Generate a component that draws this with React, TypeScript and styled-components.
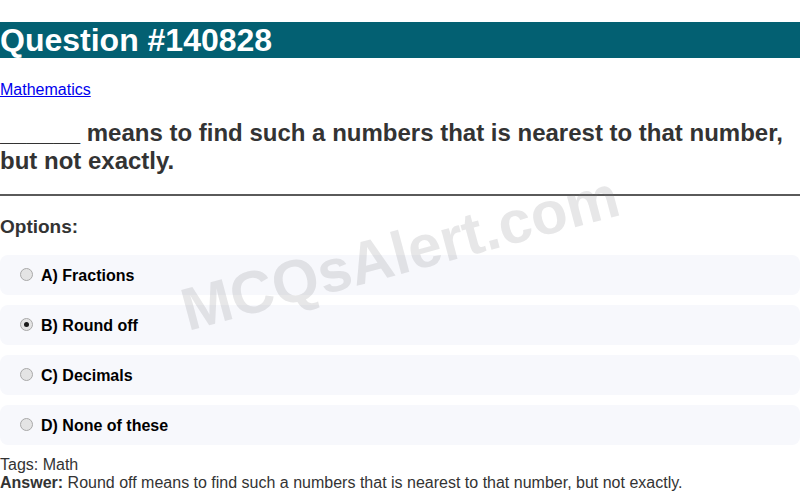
import React, { useState } from "react";
import styled, { createGlobalStyle } from "styled-components";

const GlobalStyle = createGlobalStyle`
  body {
    margin: 0;
    font-family: "Liberation Sans", Arial, sans-serif;
    background: #fff;
  }
`;

const Page = styled.div`
  position: relative;
  overflow: hidden;
`;

const Title = styled.h1`
  margin: 22px 0;
  background-color: #036072;
  color: #fff;
  font-size: 32px;
  line-height: 36px;
  font-weight: bold;
`;

const CategoryLink = styled.a`
  display: block;
  margin: 0 0 20px;
  font-size: 16px;
  line-height: 19px;
  color: #0000ee;
  text-decoration: underline;
`;

const QuestionText = styled.h2`
  margin: 0;
  font-size: 24px;
  line-height: 28px;
  font-weight: bold;
  color: #333;
`;

const Divider = styled.hr`
  margin: 19px 0 20px;
  border: none;
  border-top: 2px solid #5a5a5a;
`;

const OptionsHeading = styled.h3`
  margin: 0 0 17px;
  font-size: 19px;
  line-height: 22px;
  font-weight: bold;
  color: #333;
`;

const OptionList = styled.div`
  display: flex;
  flex-direction: column;
  gap: 10px;
  margin-bottom: 11px;
`;

const OptionRow = styled.label`
  display: flex;
  align-items: center;
  gap: 8px;
  height: 40px;
  padding: 2px 20px 0;
  box-sizing: border-box;
  background: #f7f8fc;
  border-radius: 8px;
  font-size: 16px;
  font-weight: bold;
  color: #000;
  cursor: pointer;
`;

const Radio = styled.input.attrs({ type: "radio" })`
  appearance: none;
  margin: 0 0 3px;
  width: 13px;
  height: 13px;
  border-radius: 50%;
  border: 1px solid #a9a9a9;
  background: #e4e4e4;
  box-sizing: border-box;
  display: grid;
  place-items: center;

  &:checked::after {
    content: "";
    width: 5px;
    height: 5px;
    border-radius: 50%;
    background: #1a1a1a;
  }
`;

const Meta = styled.div`
  font-size: 16px;
  line-height: 18px;
  color: #333;
`;

const Watermark = styled.div`
  position: absolute;
  left: 400px;
  top: 253px;
  transform: translate(-50%, -50%) rotate(-15deg);
  font-size: 60px;
  font-weight: bold;
  color: rgba(120, 120, 130, 0.18);
  white-space: nowrap;
  pointer-events: none;
`;

const options = ["A) Fractions", "B) Round off", "C) Decimals", "D) None of these"];

export default function App() {
  const [selected, setSelected] = useState(1);

  return (
    <Page>
      <GlobalStyle />
      <Title>Question #140828</Title>
      <CategoryLink href="#">Mathematics</CategoryLink>
      <QuestionText>
        ______ means to find such a numbers that is nearest to that number, but not exactly.
      </QuestionText>
      <Divider />
      <OptionsHeading>Options:</OptionsHeading>
      <OptionList>
        {options.map((opt, i) => (
          <OptionRow key={opt}>
            <Radio name="opt" checked={selected === i} onChange={() => setSelected(i)} />
            {opt}
          </OptionRow>
        ))}
      </OptionList>
      <Meta>Tags: Math</Meta>
      <Meta>
        <b>Answer:</b> Round off means to find such a numbers that is nearest to that number, but not exactly.
      </Meta>
      <Watermark>MCQsAlert.com</Watermark>
    </Page>
  );
}
